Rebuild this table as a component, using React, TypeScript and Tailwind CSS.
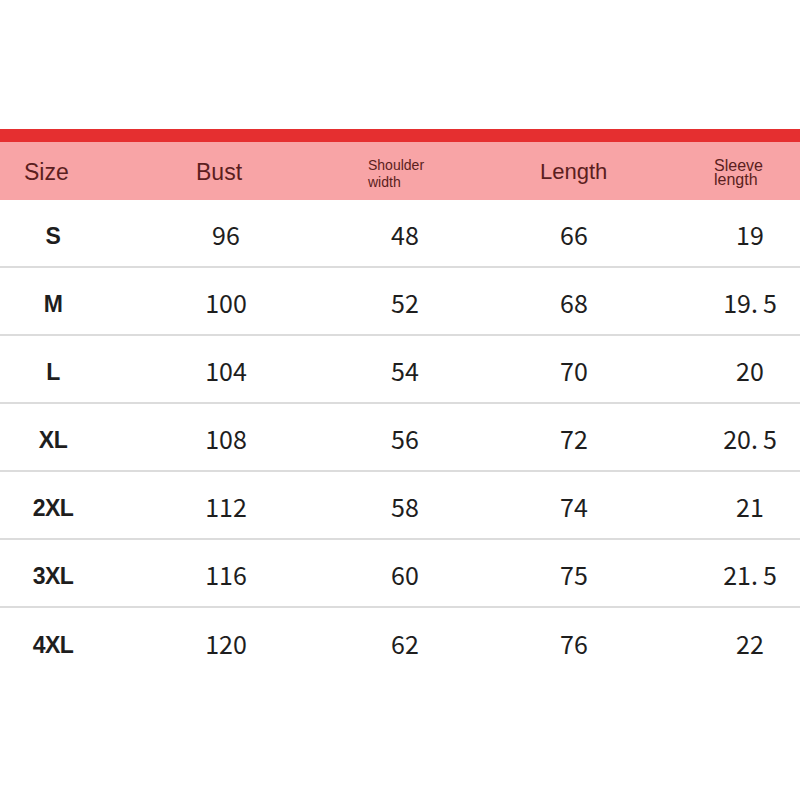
import React from "react";

const rows = [
  ["S", "96", "48", "66", "19"],
  ["M", "100", "52", "68", "19.5"],
  ["L", "104", "54", "70", "20"],
  ["XL", "108", "56", "72", "20.5"],
  ["2XL", "112", "58", "74", "21"],
  ["3XL", "116", "60", "75", "21.5"],
  ["4XL", "120", "62", "76", "22"],
];

function Num({ v }: { v: string }) {
  if (v.includes(".")) {
    const [a, b] = v.split(".");
    return (
      <span>
        {a}
        <span className="mr-[5px]">.</span>
        {b}
      </span>
    );
  }
  return <span>{v}</span>;
}

export default function App() {
  const cjk = { fontFamily: '"Noto Sans CJK SC", "Noto Sans", sans-serif' };
  return (
    <div className="w-[800px] h-[800px] bg-white pt-[129px]" style={{ fontFamily: '"Liberation Sans", Arial, sans-serif' }}>
      <div className="h-[13px] bg-[#e52f30]" />
      <div className="h-[58px] bg-[#f8a4a6] grid grid-cols-[106px_240px_118px_220px_116px] items-center text-[#5b1e20]">
        <div className="pl-[24px] text-[23px] leading-none pt-[3px]">Size</div>
        <div className="pl-[90px] text-[23px] leading-none pt-[3px]">Bust</div>
        <div className="pl-[22px] text-[14px] leading-[17px] pt-[6px]">
          Shoulder
          <br />
          width
        </div>
        <div className="pl-[76px] text-[22px] leading-none pt-[1px]">Length</div>
        <div className="pl-[30px] text-[16px] leading-[14px] pt-[4px]">
          Sleeve
          <br />
          length
        </div>
      </div>
      {rows.map((r, i) => (
        <div
          key={r[0]}
          className={
            "h-[68px] grid grid-cols-[106px_240px_118px_220px_116px] items-center text-[#1e1e1e] " +
            (i < rows.length - 1 ? "border-b-2 border-[#dcdcdc]" : "")
          }
        >
          <div className="text-center font-bold text-[23px] tracking-[-0.5px] pt-[6px]">{r[0]}</div>
          <div className="text-center text-[25px] pt-[3px]" style={cjk}>
            <Num v={r[1]} />
          </div>
          <div className="text-center text-[25px] pt-[3px]" style={cjk}>
            <Num v={r[2]} />
          </div>
          <div className="text-center text-[25px] pt-[3px]" style={cjk}>
            <Num v={r[3]} />
          </div>
          <div className="text-center text-[25px] pl-[16px] pt-[3px]" style={cjk}>
            <Num v={r[4]} />
          </div>
        </div>
      ))}
    </div>
  );
}
